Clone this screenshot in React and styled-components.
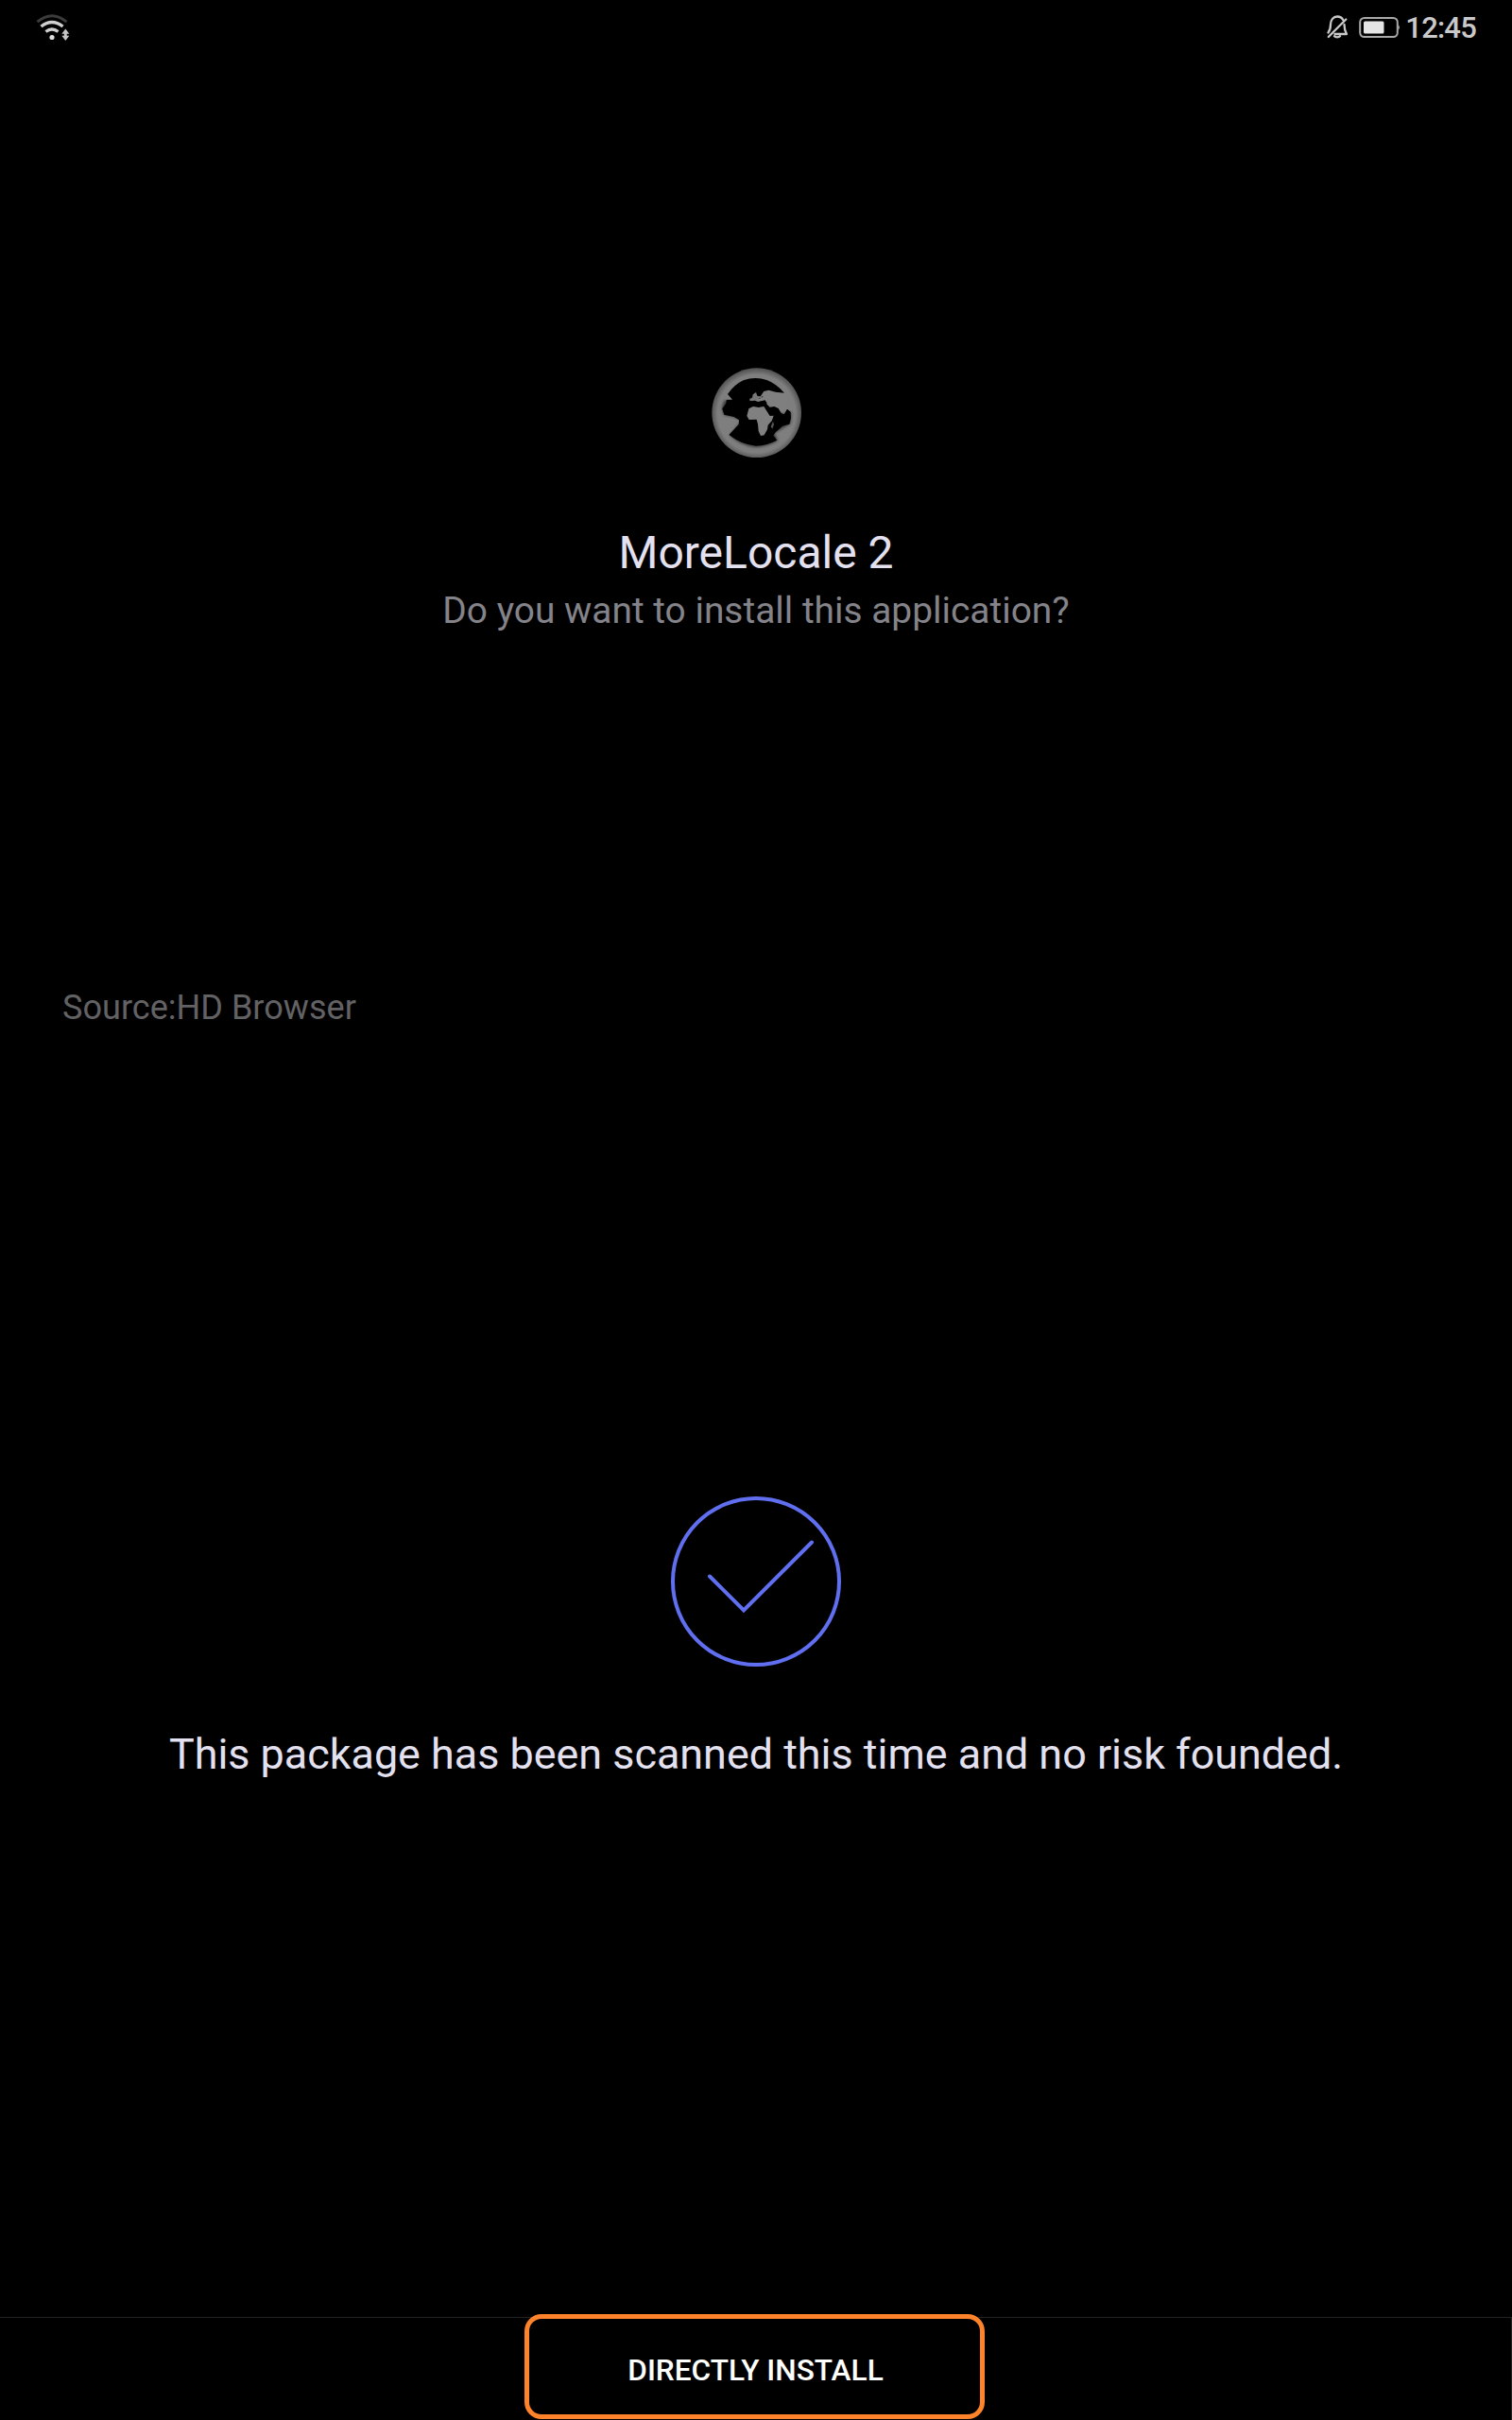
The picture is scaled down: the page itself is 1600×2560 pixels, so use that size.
import React from "react";
import styled, { createGlobalStyle } from "styled-components";

const GlobalStyle = createGlobalStyle`
  * { box-sizing: border-box; }
  html, body { margin: 0; background: #000; }
  body { font-family: Roboto, "Noto Sans", sans-serif; }
`;

const Screen = styled.div`
  width: 1600px;
  height: 2560px;
  background: #000;
  display: flex;
  flex-direction: column;
  overflow: hidden;
`;

const StatusBar = styled.header`
  height: 60px;
  padding: 0 38px;
  display: flex;
  align-items: center;
  justify-content: space-between;
  flex: none;
`;

const StatusIcons = styled.div`
  display: flex;
  align-items: center;
  height: 60px;
`;

const Glyph = styled.svg`
  display: block;
  flex: none;
`;

const Clock = styled.time`
  font-size: 31px;
  line-height: 36px;
  font-weight: 500;
  letter-spacing: -0.8px;
  color: #c9c9c9;
`;

const AppInfo = styled.section`
  height: 985px;
  padding-top: 328px;
  display: flex;
  flex-direction: column;
  align-items: center;
  flex: none;
`;

const AppName = styled.h1`
  margin: 72px 0 0;
  font-size: 48px;
  line-height: 56px;
  font-weight: 400;
  color: #e3e1f0;
`;

const Prompt = styled.p`
  margin: 10px 0 0;
  font-size: 38.9px;
  line-height: 46px;
  color: #838389;
`;

const Source = styled.p`
  margin: 0;
  padding-left: 66px;
  height: 538px;
  font-size: 36.1px;
  line-height: 42px;
  color: #626265;
  flex: none;
`;

const ScanResult = styled.section`
  display: flex;
  flex-direction: column;
  align-items: center;
  flex: 1;
`;

const ScanMessage = styled.p`
  margin: 66px 0 0;
  font-size: 44.9px;
  line-height: 53px;
  color: #e3e1f0;
`;

const ActionBar = styled.footer`
  height: 109px;
  border-top: 1px solid #222;
  border-right: 1px solid #222;
  display: flex;
  justify-content: center;
  flex: none;
`;

const InstallButton = styled.button`
  width: 487px;
  height: 111px;
  margin: -4px 2px 0 0;
  padding: 9px 0 0 2px;
  border: 5px solid #ff832b;
  border-radius: 18px;
  background: #000;
  color: #fff;
  font: 500 31.6px/38px Roboto, "Noto Sans", sans-serif;
  text-transform: uppercase;
`;

const WifiIcon = () => (
  <Glyph width="42" height="60" viewBox="38 0 42 60" fill="none">
    <path d="M39.500 23.200Q55 10.300 70.500 23.200" stroke="#3b3b3b" strokeWidth="3" />
    <path d="M43.500 28Q55 19 66.500 28" stroke="#d0d0d0" strokeWidth="3.400" />
    <path d="M48.500 33.500Q55 28.500 61.500 33.500" stroke="#d0d0d0" strokeWidth="3.400" />
    <circle cx="55" cy="39.500" r="2.600" fill="#e0e0e0" />
    <path d="M69.300 30.500l4 5.200h-8zM69.300 43l-4-5.200h8zM67.800 35h3v4h-3z" fill="#c4c4c4" />
  </Glyph>
);

const MutedBellIcon = () => (
  <Glyph width="34" height="60" viewBox="1401 0 34 60" fill="none" stroke="#c9c9c9" strokeWidth="2.300" strokeLinecap="round" strokeLinejoin="round">
    <path d="M1405.500 34.500c2.500-3 2.500-5 2.500-8.500c0-5 3-8.500 7-8.500c3 0 5 1.200 6.200 3.500M1422.500 26c0 4 .5 6.500 2.500 10h-12.500M1412 38.300a3.400 2 0 0 0 6 0M1424.300 20.500L1405.800 39" />
  </Glyph>
);

const BatteryIcon = () => (
  <Glyph width="52" height="60" viewBox="1435 0 52 60" fill="none">
    <rect x="1439.200" y="19" width="39.600" height="20" rx="4.500" stroke="#a9a9a9" strokeWidth="2" />
    <rect x="1443" y="22.500" width="21.500" height="13" rx="1.500" fill="#e6e6e6" />
    <path d="M1479.500 26q3 3 0 6z" fill="#a9a9a9" />
  </Glyph>
);

const GlobeIcon = () => (
  <Glyph width="100" height="97" viewBox="32 25 300 291">
    <defs>
      <filter id="soft" x="-10%" y="-10%" width="120%" height="120%">
        <feGaussianBlur stdDeviation="2.200" />
      </filter>
      <filter id="shade" x="-30%" y="-30%" width="160%" height="160%">
        <feGaussianBlur stdDeviation="5" />
      </filter>
      <radialGradient id="metal" gradientUnits="userSpaceOnUse" cx="184" cy="174" r="144">
        <stop offset="0" stopColor="#808080" />
        <stop offset="0.860" stopColor="#7e7e7e" />
        <stop offset="1" stopColor="#525252" />
      </radialGradient>
    </defs>
    <circle cx="184" cy="171" r="142" fill="url(#metal)" filter="url(#soft)" />
    <path d="M100 243Q136 276 182 280Q220 277 251 259L240 236 292 204 294 168 276 176 240 170 128 206zM82 132L74 156 80 178 112 184 128 192V140z" fill="#000" opacity=".6" filter="url(#shade)" />
    <g filter="url(#soft)">
      <path d="M92 112Q112 82 142 68Q180 54 216 67Q246 78 272 108L244 105 222 99 207 103 197 117 205 120 193 126 179 120 168 124 160 134 172 129 188 136 211 131 217 144 226 153 240 151 253 157 262 172 271 176 281 159 292 168 293 188 288 207 266 213 244 233 237 243 249 258Q218 274 182 276Q136 272 96 241L127 208 128 194 112 184 81 177 75 158 87 141 88 130 107 129z" fill="#000" />
      <path d="M159 158L173 151 190 154 207 151 216 165 226 181 238 180 232 197 220 210 218 224 208 242 197 244 190 229 188 207 184 192 160 193 153 181z" fill="#808080" />
      <path d="M172 113l10-7 4 11 8 2 8-2-3 7-12 2-10 6-11 2-5-7 9-3z" fill="#777" />
      <path d="M160 137l12-3 16 6 23-6 6 5-9 10-18-1-14-3-16 8z" fill="#000" />
      <path d="M236 198l3 10-5 14-5-7z" fill="#555" />
    </g>
  </Glyph>
);

const SafeIcon = () => (
  <Glyph width="180" height="180" viewBox="0 0 180 180" fill="none" stroke="#606ff0" strokeWidth="4">
    <circle cx="90" cy="90" r="88" />
    <path d="M41 84.500L77 120.500 149 48.500" strokeLinecap="round" />
  </Glyph>
);

export default function App() {
  return (
    <Screen>
      <GlobalStyle />
      <StatusBar>
        <StatusIcons>
          <WifiIcon />
        </StatusIcons>
        <StatusIcons>
          <MutedBellIcon />
          <BatteryIcon />
          <Clock>12:45</Clock>
        </StatusIcons>
      </StatusBar>
      <AppInfo>
        <GlobeIcon />
        <AppName>MoreLocale 2</AppName>
        <Prompt>Do you want to install this application?</Prompt>
      </AppInfo>
      <Source>Source:HD Browser</Source>
      <ScanResult>
        <SafeIcon />
        <ScanMessage>This package has been scanned this time and no risk founded.</ScanMessage>
      </ScanResult>
      <ActionBar>
        <InstallButton>Directly install</InstallButton>
      </ActionBar>
    </Screen>
  );
}
